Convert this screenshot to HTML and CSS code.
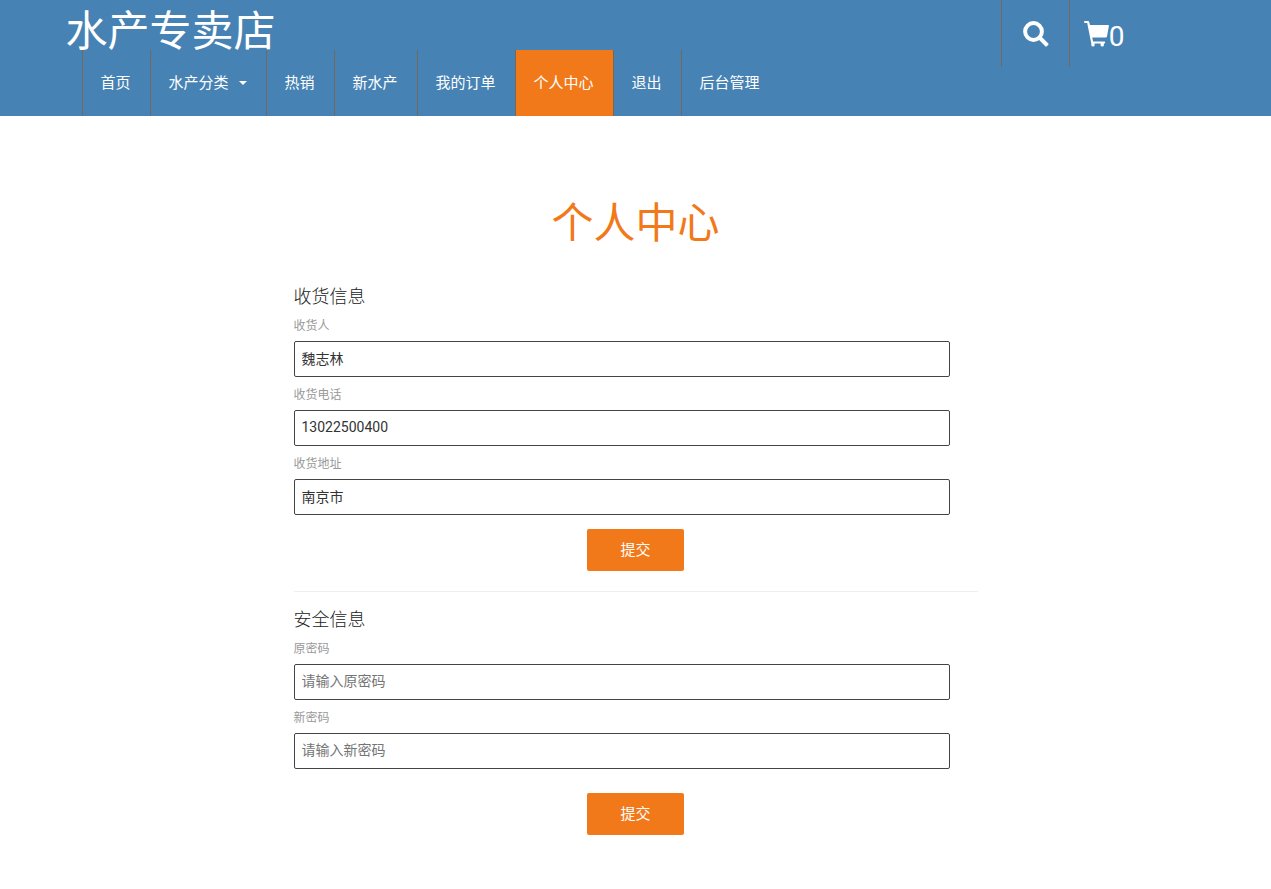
FILE: index.html
```html
<!DOCTYPE html>
<html lang="zh-CN">
<head>
<meta charset="utf-8">
<meta name="viewport" content="width=device-width, initial-scale=1">
<title>个人中心</title>
<link rel="stylesheet" href="styles.css">
</head>
<body>
<header class="header">
  <div class="container header-row">
    <div class="brand-nav">
      <a class="logo" href="#">水产专卖店</a>
      <nav class="nav">
        <a class="nav-link" href="#">首页</a>
        <a class="nav-link" href="#">水产分类<span class="caret"></span></a>
        <a class="nav-link" href="#">热销</a>
        <a class="nav-link" href="#">新水产</a>
        <a class="nav-link" href="#">我的订单</a>
        <a class="nav-link active" href="#">个人中心</a>
        <a class="nav-link" href="#">退出</a>
        <a class="nav-link" href="#">后台管理</a>
      </nav>
    </div>
    <div class="actions">
      <a class="action search" href="#" aria-label="搜索">
        <svg width="26" height="26" viewBox="0 0 26 26" aria-hidden="true">
          <circle cx="10.5" cy="10.5" r="8.4" fill="none" stroke="currentColor" stroke-width="4"/>
          <path d="M15.6 18.4 18.4 15.6 25.3 22.4Q26 23.1 25.3 23.8L23.8 25.3Q23 26 22.3 25.3Z" fill="currentColor"/>
        </svg>
      </a>
      <a class="action cart" href="#">
        <svg width="25" height="26" viewBox="0 0 25 26" aria-hidden="true">
          <path d="M1 0H4.2Q4.9 0 5.1.7L6 4H24.2Q25 4 24.9 4.8L23 15.4Q22.8 16.4 21.8 16.4H8.2L9.1 20.4H20.4Q21.2 20.4 21.2 21.4T20.4 22.4H19.9V24.2Q19.9 25.6 18.2 25.6T16.6 24.2V22.4H10.6V24.2Q10.6 25.6 9 25.6T7.3 24.2V22.4L3.2 2H1Q0 2 0 1T1 0Z" fill="currentColor"/>
        </svg><span class="count">0</span>
      </a>
    </div>
  </div>
</header>
<main class="account">
  <h1 class="title">个人中心</h1>
  <form class="form">
    <h2 class="form-title">收货信息</h2>
    <label class="label" for="name">收货人</label>
    <input class="input" id="name" type="text" value="魏志林">
    <label class="label" for="phone">收货电话</label>
    <input class="input" id="phone" type="text" value="13022500400">
    <label class="label" for="address">收货地址</label>
    <input class="input" id="address" type="text" value="南京市">
    <button class="submit" type="submit">提交</button>
  </form>
  <hr class="divider">
  <form class="form form-security">
    <h2 class="form-title">安全信息</h2>
    <label class="label" for="old-password">原密码</label>
    <input class="input" id="old-password" type="password" placeholder="请输入原密码">
    <label class="label" for="new-password">新密码</label>
    <input class="input" id="new-password" type="password" placeholder="请输入新密码">
    <button class="submit" type="submit">提交</button>
  </form>
</main>
</body>
</html>
```
FILE: styles.css
```css
* {
  box-sizing: border-box;
}

body {
  margin: 0;
  background: #fff;
  color: #222;
  font-family: Roboto, "Noto Sans CJK SC", sans-serif;
  font-size: 14px;
}

a {
  color: inherit;
  text-decoration: none;
}

.container {
  max-width: 1140px;
  margin: 0 auto;
}

.header {
  background: #4682b4;
  color: #fff;
}

.header-row {
  display: flex;
  justify-content: space-between;
  align-items: flex-start;
}

.brand-nav {
  display: flex;
  flex-direction: column;
}

.logo {
  height: 50px;
  font-size: 42px;
  line-height: 64px;
}

.nav {
  display: flex;
  padding-left: 16px;
}

.nav-link {
  display: flex;
  align-items: center;
  height: 66px;
  padding: 0 19px 4px 18px;
  border-left: 1px solid #73685c;
  font-size: 15px;
  white-space: nowrap;
}

.nav-link.active {
  background: #f2791a;
}

.caret {
  margin: 4px 0 0 10px;
  border: 4px solid transparent;
  border-top-color: currentColor;
  border-bottom: 0;
}

.actions {
  display: flex;
  margin-right: 65px;
}

.action {
  display: flex;
  align-items: center;
  height: 67px;
  border-left: 1px solid #73685c;
  font-size: 28px;
}

.search {
  padding: 0 20px 0 21px;
}

.cart {
  padding: 0 16px 0 14px;
}

.count {
  padding-top: 6px;
}

.account {
  width: 54%;
  max-width: 684px;
  margin: 0 auto;
  padding: 78px 0 54px;
}

.title {
  margin: 0 0 32px;
  color: #f2791a;
  font-size: 42px;
  font-weight: 400;
  line-height: 60px;
  text-align: center;
}

.form {
  display: flex;
  flex-direction: column;
}

.form-title {
  margin: 0;
  font-size: 18px;
  font-weight: 300;
  line-height: 22px;
}

.label {
  height: 33px;
  color: #999;
  font-size: 12px;
  line-height: 36px;
}

.input {
  width: 96%;
  height: 36px;
  padding: 0 7px 3px;
  border: 1px solid #444;
  border-radius: 2px;
  background: #fff;
  color: #333;
  font: inherit;
}

.input::placeholder {
  color: #757575;
}

.submit {
  align-self: center;
  height: 42px;
  margin-top: 14px;
  padding: 0 33px 4px;
  border: 0;
  border-radius: 2px;
  background: #f2791a;
  color: #fff;
  font: inherit;
  font-size: 15px;
}

.form-security .submit {
  margin-top: 24px;
}

.divider {
  margin: 20px 0 17px;
  border: 0;
  border-top: 1px solid #eee;
}
```
